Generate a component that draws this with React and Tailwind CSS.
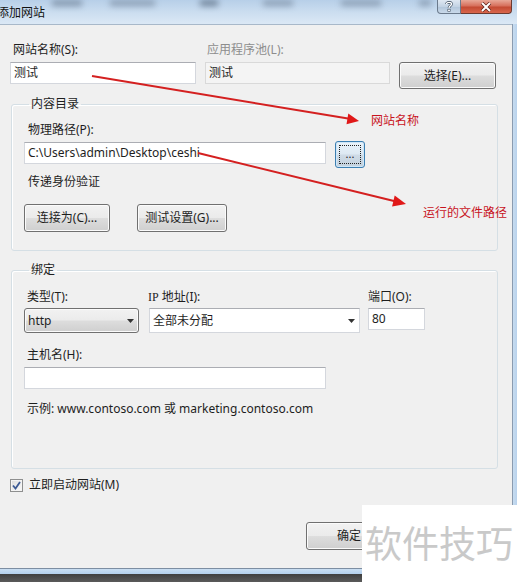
import React from "react";

const btn =
  "border border-[#707070] rounded-[3px] bg-[linear-gradient(to_bottom,#f2f2f2_0%,#ebebeb_48%,#dddddd_52%,#cfcfcf_100%)] shadow-[inset_0_0_0_1px_#fbfbfb] flex items-center justify-center text-[12px] text-[#1e1e1e]";
const input =
  "h-[22px] bg-white border border-[#d4d7dd] border-t-[#abadb3] flex items-center px-[3px] text-[12px] text-[#1e1e1e] whitespace-nowrap overflow-hidden";

function Arrow({ color = "#333" }) {
  return (
    <svg width="7" height="4" viewBox="0 0 7 4">
      <path d="M0 0 H7 L3.5 4 Z" fill={color} />
    </svg>
  );
}

export default function App() {
  return (
    <div className="relative w-[517px] h-[582px] overflow-hidden bg-[#f0f0f0] font-['Noto_Sans','Noto_Sans_CJK_SC',sans-serif] text-[12px] text-[#1e1e1e] leading-[16px]">
      {/* Title bar */}
      <div className="relative h-[24px] flex justify-between bg-[linear-gradient(to_bottom,#b7cfe8_0%,#c9dcef_45%,#dbe8f5_100%)]">
        <div className="absolute inset-x-0 top-0 h-[10px] flex items-start blur-[3px] opacity-60 pointer-events-none">
          <div className="ml-[52px] w-[30px] h-[6px] bg-[#5a6b80]" />
          <div className="ml-[28px] w-[45px] h-[6px] bg-[#6a7b90]" />
          <div className="ml-[45px] w-[18px] h-[6px] bg-[#3a4b60]" />
          <div className="ml-[45px] w-[30px] h-[6px] bg-[#6a7b90]" />
          <div className="ml-[48px] w-[40px] h-[6px] bg-[#6a7b90]" />
          <div className="ml-[38px] w-[12px] h-[6px] bg-[#6a7b90]" />
        </div>
        <div className="relative ml-[-3px] mt-[4px] text-[12px] text-[#111] font-['Noto_Sans_CJK_SC',sans-serif]">
          添加网站
        </div>
        <div className="relative flex mr-[5px] h-[14px]">
          <div className="w-[24px] h-[14px] border border-t-0 border-[#6b7a8c] rounded-bl-[4px] bg-[linear-gradient(to_bottom,#dfe8f2,#c3d3e4_50%,#b1c5da_51%,#c9d9ea)] flex items-center justify-center">
            <svg width="8" height="11" viewBox="0 0 8 11">
              <path d="M1.5 3 C1.5 0.8 6.5 0.8 6.5 3 C6.5 4.8 4 4.8 4 7" fill="none" stroke="#3a4a5c" strokeWidth="2.6" />
              <path d="M1.5 3 C1.5 0.8 6.5 0.8 6.5 3 C6.5 4.8 4 4.8 4 7" fill="none" stroke="#ffffff" strokeWidth="1.4" />
              <rect x="2.8" y="8.2" width="2.4" height="2.4" fill="#ffffff" stroke="#3a4a5c" strokeWidth="0.6" />
            </svg>
          </div>
          <div className="w-[51px] h-[14px] border border-t-0 border-l-0 border-[#6b3a30] rounded-br-[4px] bg-[linear-gradient(to_bottom,#e8a898,#d7705c_45%,#c44a33_55%,#d8664c)] flex items-center justify-center">
            <svg width="12" height="10" viewBox="0 0 12 10">
              <path d="M2 1 L10 9 M10 1 L2 9" stroke="#5a2018" strokeWidth="3.4" />
              <path d="M2 1 L10 9 M10 1 L2 9" stroke="#ffffff" strokeWidth="2" />
            </svg>
          </div>
        </div>
      </div>

      {/* Middle */}
      <div className="flex h-[544px]">
        <div className="w-[512px] h-full border-t border-[#a8b8c9] pt-[17px] flex flex-col">
          {/* Row 1 */}
          <div className="flex pl-[10px] items-start">
            <div className="w-[186px] flex flex-col">
              <div className="pl-[3px] h-[16px]">网站名称(S):</div>
              <div className={`${input} mt-[4px] w-full`}>测试</div>
            </div>
            <div className="ml-[9px] w-[185px] flex flex-col">
              <div className="pl-[2px] h-[16px] text-[#8d8d8d]">应用程序池(L):</div>
              <div className="mt-[4px] w-full h-[22px] bg-[#f4f4f4] border border-[#d9d9d9] flex items-center px-[3px]">
                测试
              </div>
            </div>
            <div className={`${btn} ml-[9px] mt-[20px] w-[97px] h-[27px]`}>选择(E)...</div>
          </div>

          {/* Group 1 */}
          <fieldset className="ml-[11px] mt-[7px] w-[487px] h-[155px] border border-[#d5dfe5] rounded-[3px] shadow-[inset_1px_1px_0_#ffffff] px-[12px] pt-[10px]">
            <legend className="ml-[5px] px-[2px] h-[16px] leading-[16px]">内容目录</legend>
            <div className="pl-[4px] h-[16px]">物理路径(P):</div>
            <div className="mt-[3px] flex items-start">
              <div className={`${input} mt-[1px] w-[302px]`}>C:\Users\admin\Desktop\ceshi</div>
              <div className="ml-[9px] w-[30px] h-[27px] border border-[#3c7fb1] rounded-[3px] bg-[linear-gradient(to_bottom,#eaf3fa_0%,#dde9f3_48%,#cfdbe6_52%,#c3d2de_100%)] shadow-[inset_0_0_0_1px_#cfe6f7] p-[3px]">
                <div className="w-full h-full border border-dotted border-[#222] flex items-center justify-center text-[11px] leading-none pb-[3px]">
                  ...
                </div>
              </div>
            </div>
            <div className="mt-[6px] pl-[4px] h-[16px]">传递身份验证</div>
            <div className="mt-[14px] flex">
              <div className={`${btn} w-[86px] h-[28px]`}>连接为(C)...</div>
              <div className={`${btn} ml-[27px] w-[90px] h-[28px]`}>测试设置(G)...</div>
            </div>
          </fieldset>

          {/* Group 2 */}
          <fieldset className="ml-[11px] mt-[11px] w-[487px] h-[207px] border border-[#d5dfe5] rounded-[3px] shadow-[inset_1px_1px_0_#ffffff] px-[12px] pt-[11px]">
            <legend className="ml-[5px] px-[2px] h-[16px] leading-[16px]">绑定</legend>
            <div className="flex items-start">
              <div className="w-[115px] flex flex-col">
                <div className="pl-[3px] h-[16px]">类型(T):</div>
                <div className="mt-[3px] h-[25px] w-full border border-[#707070] rounded-[3px] bg-[linear-gradient(to_bottom,#f2f2f2_0%,#ebebeb_48%,#dddddd_52%,#cfcfcf_100%)] shadow-[inset_0_0_0_1px_#fbfbfb] flex items-center justify-between pl-[3px] pr-[4px]">
                  <span>http</span>
                  <Arrow />
                </div>
              </div>
              <div className="ml-[10px] w-[211px] flex flex-col">
                <div className="ml-[-1px] h-[16px]">
                  <span className="font-['Liberation_Serif',serif]">IP</span> 地址(I):
                </div>
                <div className="mt-[3px] h-[25px] w-full bg-white border border-[#d4d7dd] border-t-[#abadb3] flex items-center justify-between pl-[3px] pr-[4px]">
                  <span>全部未分配</span>
                  <Arrow />
                </div>
              </div>
              <div className="ml-[8px] w-[57px] flex flex-col">
                <div className="h-[16px]">端口(O):</div>
                <div className={`${input} mt-[3px] w-full`}>80</div>
              </div>
            </div>
            <div className="mt-[14px] pl-[3px] h-[16px]">主机名(H):</div>
            <div className={`${input} mt-[4px] w-[302px]`}></div>
            <div className="mt-[12px] pl-[3px] h-[16px] whitespace-nowrap">
              示例: www.contoso.com 或 marketing.contoso.com
            </div>
          </fieldset>

          {/* Checkbox */}
          <div className="mt-[8px] ml-[10px] flex items-center h-[16px]">
            <div className="w-[13px] h-[13px] border border-[#8e8f8f] bg-[linear-gradient(135deg,#dcdcdc,#fbfbfb)] shadow-[inset_0_0_0_1px_#f4f4f4] flex items-center justify-center">
              <svg width="9" height="9" viewBox="0 0 9 9">
                <path d="M1 4.5 L3.5 7.5 L8 1" fill="none" stroke="#3c5a94" strokeWidth="1.8" />
              </svg>
            </div>
            <span className="ml-[6px]">立即启动网站(M)</span>
          </div>

          {/* OK button */}
          <div className="mt-[29px] ml-[306px] flex">
            <div className={`${btn} w-[86px] h-[28px]`}>确定</div>
          </div>
        </div>
        <div className="flex-1 h-full border-l border-[#8a9bb0] bg-[linear-gradient(to_right,#c7dcf0,#b9d2ec)]" />
      </div>

      {/* Bottom frame */}
      <div className="h-[1px] bg-[#7d8ea2]" />
      <div className="h-[5px] bg-[linear-gradient(to_bottom,#c9def2,#b3cfec)]" />
      <div className="h-[8px] bg-[linear-gradient(to_bottom,#3f3f3f,#5a5a5a)]" />

      {/* Annotations */}
      <svg className="absolute inset-0 pointer-events-none" width="517" height="582" viewBox="0 0 517 582">
        <line x1="92" y1="76" x2="348" y2="118.5" stroke="#d42020" strokeWidth="2" />
        <polygon points="359,121 346.5,124.3 348.3,113.5" fill="#e01818" />
        <line x1="198" y1="153" x2="395" y2="201.3" stroke="#d42020" strokeWidth="2" />
        <polygon points="406,204 392.1,206.5 394.7,195.6" fill="#e01818" />
      </svg>
      <div className="absolute left-[371px] top-[112px] text-[12px] leading-[16px] text-[#c8141e] font-['Noto_Sans_CJK_SC',sans-serif]">
        网站名称
      </div>
      <div className="absolute left-[423px] top-[204px] text-[12px] leading-[16px] text-[#c8141e] font-['Noto_Sans_CJK_SC',sans-serif]">
        运行的文件路径
      </div>

      {/* Watermark */}
      <div className="absolute right-0 bottom-0 w-[155px] h-[77px] bg-white flex items-center pl-[3px] pb-[2px]">
        <span className="text-[37px] leading-none text-[#c9c9c9] font-['Noto_Sans_CJK_SC',sans-serif]">
          软件技巧
        </span>
      </div>
    </div>
  );
}
